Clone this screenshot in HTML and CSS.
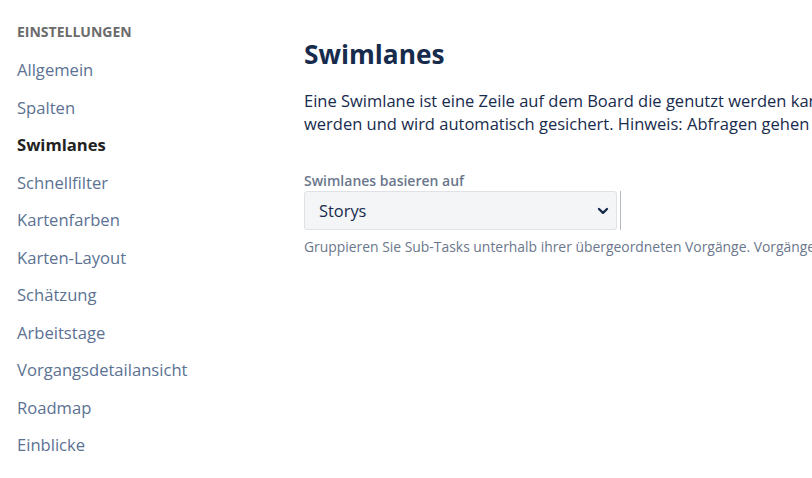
FILE: index.html
```html
<!DOCTYPE html>
<html lang="de">
<head>
<meta charset="utf-8">
<title>Swimlanes</title>
<link rel="stylesheet" href="styles.css">
</head>
<body>
<div class="page">
  <nav class="sidebar">
    <div class="side-title">EINSTELLUNGEN</div>
    <ul class="menu">
      <li><a>Allgemein</a></li>
      <li><a>Spalten</a></li>
      <li><a class="active">Swimlanes</a></li>
      <li><a>Schnellfilter</a></li>
      <li><a>Kartenfarben</a></li>
      <li><a>Karten-Layout</a></li>
      <li><a>Schätzung</a></li>
      <li><a>Arbeitstage</a></li>
      <li><a>Vorgangsdetailansicht</a></li>
      <li><a>Roadmap</a></li>
      <li><a>Einblicke</a></li>
    </ul>
  </nav>
  <main class="content">
    <h1 class="heading">Swimlanes</h1>
    <p class="intro">
      <span class="line">Eine Swimlane ist eine Zeile auf dem Board die genutzt werden kann, um Vorgänge zu gruppieren.</span>
      <span class="line">werden und wird automatisch gesichert. Hinweis: Abfragen gehen</span>
    </p>
    <div class="field">
      <label class="label">Swimlanes basieren auf</label>
      <div class="select-row">
        <div class="select">
          <span class="select-value">Storys</span>
          <svg class="chevron" width="12" height="8" viewBox="0 0 12 8"><path d="M2 2 L6 5.8 L10 2" fill="none" stroke="#172b4d" stroke-width="2.4" stroke-linecap="round" stroke-linejoin="round"/></svg>
        </div>
        <div class="caret"></div>
      </div>
      <div class="help">Gruppieren Sie Sub-Tasks unterhalb ihrer übergeordneten Vorgänge. Vorgänge</div>
    </div>
  </main>
</div>
</body>
</html>
```

FILE: styles.css
```css
html, body {
  margin: 0;
  padding: 0;
  background: #ffffff;
  overflow: hidden;
}
body {
  font-family: "Open Sans", "Noto Sans", sans-serif;
  color: #172b4d;
  width: 812px;
  height: 478px;
}
.page {
  display: flex;
  width: 812px;
  height: 478px;
  overflow: hidden;
}
.sidebar {
  flex: 0 0 304px;
  box-sizing: border-box;
  padding: 22px 0 0 17px;
}
.side-title {
  font-size: 14px;
  font-weight: 700;
  color: #6b6b6b;
  line-height: 20px;
}
.menu {
  list-style: none;
  margin: 16px 0 0 0;
  padding: 0;
}
.menu li {
  height: 37.5px;
  line-height: 24px;
}
.menu a {
  font-size: 16.6px;
  color: #5b7293;
}
.menu a.active {
  color: #222222;
  font-weight: 700;
}
.content {
  flex: 1 1 auto;
  min-width: 0;
  padding-top: 36px;
}
.heading {
  margin: 0;
  font-size: 26.3px;
  font-weight: 700;
  line-height: 36px;
  color: #172b4d;
}
.intro {
  margin: 17px 0 0 0;
  font-size: 16.5px;
  line-height: 23px;
  color: #172b4d;
}
.line {
  display: block;
  white-space: nowrap;
}
.field {
  margin-top: 38px;
}
.label {
  display: block;
  font-size: 14px;
  font-weight: 600;
  color: #6b778c;
  line-height: 16px;
}
.select-row {
  display: flex;
  align-items: stretch;
  margin-top: 2px;
}
.select {
  box-sizing: border-box;
  width: 313px;
  height: 39px;
  background: #f4f5f7;
  border: 1px solid #dfe1e6;
  border-radius: 3px;
  display: flex;
  align-items: center;
  justify-content: space-between;
  padding: 0 7px 0 14px;
}
.select-value {
  font-size: 16.4px;
  color: #172b4d;
}
.chevron {
  display: block;
}
.caret {
  width: 1px;
  margin-left: 3px;
  background: #b3bac5;
}
.help {
  margin-top: 8px;
  font-size: 13.9px;
  color: #6b778c;
  white-space: nowrap;
  line-height: 18px;
}
```
